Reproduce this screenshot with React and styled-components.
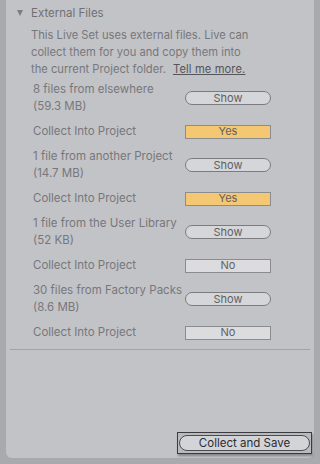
import React from 'react';
import styled, { createGlobalStyle } from 'styled-components';

const GlobalStyle = createGlobalStyle`
  html, body { margin: 0; padding: 0; background: #a9aaae; }
  body { font-family: Inter, "Noto Sans", "Liberation Sans", sans-serif; }
`;

const Frame = styled.div`
  width: 320px;
  height: 464px;
  box-sizing: border-box;
  padding: 0 6px 6px 6px;
  background: #a9aaae;
`;

const Panel = styled.div`
  height: 100%;
  box-sizing: border-box;
  background: #c2c3c7;
  border-radius: 0 0 6px 6px;
  display: flex;
  flex-direction: column;
  padding: 4px 0 4px 0;
  color: #77777b;
  font-size: 11.5px;
`;

const Header = styled.div`
  display: flex;
  align-items: center;
  height: 17px;
  padding-left: 11px;
  gap: 8px;
  color: #707074;
  font-size: 11.5px;
`;

const Triangle = styled.span`
  width: 0;
  height: 0;
  border-left: 3.5px solid transparent;
  border-right: 3.5px solid transparent;
  border-top: 6px solid #7e7e82;
`;

const Intro = styled.p`
  margin: 6px 0 0 0;
  padding-left: 25px;
  line-height: 17px;
  font-size: 11.2px;
`;

const Link = styled.a`
  color: #55555a;
  text-decoration: underline;
  margin-left: 7px;
  letter-spacing: 0.1px;
`;

const Rows = styled.div`
  display: flex;
  flex-direction: column;
  gap: 8px;
  margin-top: 3px;
  padding: 0 0 0 27px;
`;

const Row = styled.div`
  display: grid;
  grid-template-columns: 152px 86px;
  align-items: center;
  line-height: 17px;
  min-height: ${p => (p.$tall ? 34 : 17)}px;
`;

const Label = styled.div`
  white-space: pre-line;
`;

const Button = styled.div`
  height: 14px;
  box-sizing: border-box;
  display: flex;
  align-items: center;
  justify-content: center;
  font-size: 11px;
  color: #606064;
  background: ${p => (p.$kind === 'yes' ? '#f4c872' : p.$kind === 'show' ? '#d5d6d9' : '#dcdcdf')};
  border: 1px solid ${p => (p.$kind === 'show' ? '#7c7c80' : '#8c8c90')};
  border-radius: ${p => (p.$kind === 'show' ? '7px' : '0')};
`;

const Divider = styled.hr`
  border: 0;
  border-top: 1px solid #a2a3a7;
  margin: 8px 4px 0 4px;
`;

const Footer = styled.div`
  margin-top: auto;
  display: flex;
  justify-content: flex-end;
  padding-right: 2px;
`;

const SaveFrame = styled.div`
  width: 135px;
  height: 22px;
  box-sizing: border-box;
  border: 1px solid #3c3c40;
  background: #b9babe;
  box-shadow: 1px 2px 2px rgba(60, 60, 64, 0.45);
  padding: 2px 1px 2px 1px;
`;

const SaveButton = styled.div`
  height: 16px;
  box-sizing: border-box;
  border: 1px solid #4c4c50;
  border-radius: 8px;
  background: #d3d4d8;
  display: flex;
  align-items: center;
  justify-content: center;
  color: #2c2c30;
  font-size: 11.5px;
`;

const groups = [
  { label: '8 files from elsewhere\n(59.3 MB)', collect: 'Yes' },
  { label: '1 file from another Project\n(14.7 MB)', collect: 'Yes' },
  { label: '1 file from the User Library\n(52 KB)', collect: 'No' },
  { label: '30 files from Factory Packs\n(8.6 MB)', collect: 'No' },
];

export default function App() {
  return (
    <Frame>
      <GlobalStyle />
      <Panel>
        <Header><Triangle /><span>External Files</span></Header>
        <Intro>
          This Live Set uses external files. Live can<br />
          collect them for you and copy them into<br />
          the current Project folder.<Link>Tell me more.</Link>
        </Intro>
        <Rows>
          {groups.map(g => (
            <React.Fragment key={g.label}>
              <Row $tall>
                <Label>{g.label}</Label>
                <Button $kind="show">Show</Button>
              </Row>
              <Row>
                <Label>Collect Into Project</Label>
                <Button $kind={g.collect === 'Yes' ? 'yes' : 'no'}>{g.collect}</Button>
              </Row>
            </React.Fragment>
          ))}
        </Rows>
        <Divider />
        <Footer>
          <SaveFrame>
            <SaveButton>Collect and Save</SaveButton>
          </SaveFrame>
        </Footer>
      </Panel>
    </Frame>
  );
}
